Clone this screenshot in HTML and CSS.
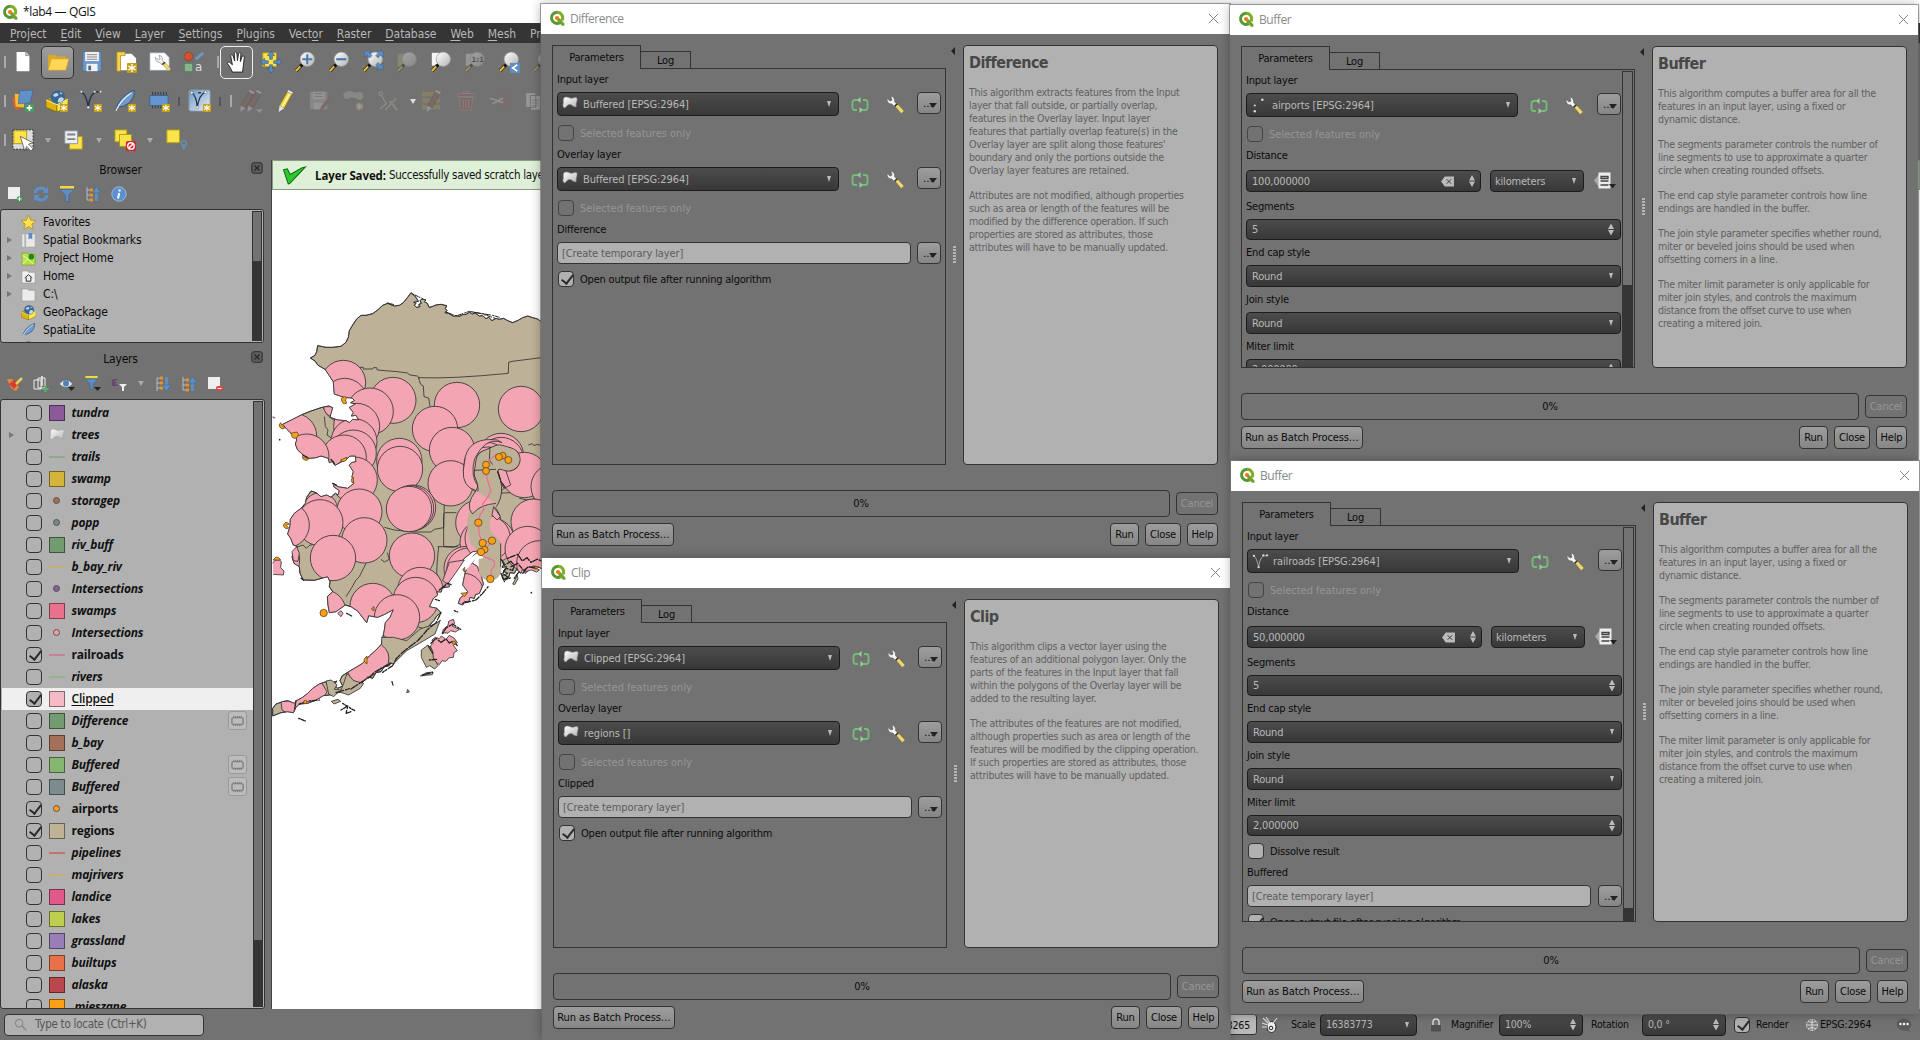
FILE: index.html
```html
<!DOCTYPE html>
<html lang="en">
<head>
<meta charset="utf-8">
<title>*lab4 — QGIS</title>
<link rel="stylesheet" href="styles.css">
</head>
<body>
<svg class="defs" aria-hidden="true">
  <defs>
    <linearGradient id="lens" x1="0" y1="0" x2="1" y2="1"><stop offset="0" stop-color="#fff"/><stop offset="1" stop-color="#b4b4b4"/></linearGradient>
    <linearGradient id="bluebox" x1="0" y1="0" x2="1" y2="1"><stop offset="0" stop-color="#6d97c4"/><stop offset="1" stop-color="#e8f0f8"/></linearGradient>
    <symbol id="logo" viewBox="0 0 16 16"><path d="M8 2.200a5.600 5.600 0 1 0 2.600 10.600" fill="none" stroke="#589632" stroke-width="3"/><path d="M8 2.200a5.600 5.600 0 0 1 5 8.200" fill="none" stroke="#7fae2a" stroke-width="3"/><path d="M8.200 8.600l2.600-.4 4.600 5.200v2.400h-2.400L8.200 11z" fill="#6fa32c"/><circle cx="8" cy="8" r="2.100" fill="#ee7913"/></symbol>
    <symbol id="close" viewBox="0 0 12 12"><path d="M1 1l10 10M11 1L1 11" stroke="#777" stroke-width="1" fill="none"/></symbol>
    <symbol id="loop" viewBox="0 0 18 16"><path d="M6.500 3H4q-2.500 0-2.500 2.500v5Q1.500 13 4 13h2M11.500 13H14q2.500 0 2.500-2.500v-5Q16.500 3 14 3h-2" fill="none" stroke="#74bd78" stroke-width="1.800"/><path d="M9.500 0v6L6 3zM8.500 10v6l3.500-3z" fill="#8fd493"/></symbol>
    <symbol id="wrench" viewBox="0 0 18 18"><path d="M1 2.500l3 2.500 2-.8L5 0q4 1 3.500 5.500L11 8.500 8.500 11 6 8Q1 8 1 2.500z" fill="#f4f4f4" stroke="#555" stroke-width=".5"/><path d="M8.500 9.500l2.500-2 7 7.500-2.800 2.500z" fill="#f0d774" stroke="#8a7a30" stroke-width=".5"/><path d="M8 9.800l3-2.600 1 1-3 2.700z" fill="#333"/></symbol>
    <symbol id="poly" viewBox="0 0 18 14"><path d="M2.500 1.500Q5 0 7.500 1.500q2.500 1.500 5 .5t4-.3Q17.600 3 16.500 6t-.5 5.500q-1.500 1-3.500-.5Q9.500 8 7 9.500T3.500 13Q1.500 13.500 1 10q1-3 .5-5 0-2.500 1-3.500z" fill="url(#lens)" stroke="#999" stroke-width=".6"/></symbol>
    <symbol id="pts" viewBox="0 0 18 18"><g fill="#ddd"><circle cx="4" cy="9" r="1.100"/><circle cx="4" cy="15" r="1.300"/><circle cx="12" cy="3" r="1.300"/></g></symbol>
    <symbol id="vline" viewBox="0 0 18 18"><path d="M2 3q3 2 5 12Q8 6 12 3h4" fill="none" stroke="#aaa" stroke-width="1"/><g fill="#ddd"><circle cx="2" cy="3" r="1.200"/><circle cx="7" cy="15" r="1.200"/><circle cx="12" cy="2.500" r="1.200"/><circle cx="16" cy="2.500" r="1.200"/></g></symbol>
    <symbol id="clear" viewBox="0 0 14 12"><path d="M0 6l4-5.500h10v11H4z" fill="#bbb"/><path d="M6 3.500l5 5M11 3.500l-5 5" stroke="#333" stroke-width="1"/></symbol>
    <symbol id="ddef" viewBox="0 0 22 18"><path d="M0 8.500l5-6V15z" fill="#aaa"/><path d="M4.500.500h12v16h-12z" fill="#ececec"/><path d="M7 4.500h7v2H7zM6.500 9h8M6.500 13h8" stroke="#444" fill="none" stroke-width="1.300"/><path d="M15 12h7l-3.500 4.500z" fill="#222"/></symbol>
    <symbol id="star" viewBox="0 0 9 9"><rect width="9" height="9" rx="1" fill="#c9a011"/><path d="M4.500 1v7M1.300 2.800l6.400 3.400M7.700 2.800L1.300 6.200" stroke="#fff" stroke-width="1.200"/></symbol>
    <symbol id="mag" viewBox="0 0 22 24"><path d="M1 22l6-6.500" stroke="#222" stroke-width="3.500"/><path d="M1 22l5.500-6" stroke="#f4c22c" stroke-width="2.200"/><path d="M6 17l2.600-3" stroke="#111" stroke-width="3"/><circle cx="13.500" cy="9" r="7.800" fill="url(#lens)" stroke="#999" stroke-width=".8"/></symbol>
    <symbol id="pencil" viewBox="0 0 18 24"><path d="M2 17L10.500 2l5 2.500L7 20z" fill="#f3d947" stroke="#8a7718" stroke-width=".8"/><path d="M10.500 2l5 2.500 1-2L11.500 0z" fill="#f0f0f0" stroke="#888" stroke-width=".4"/><path d="M5 18L13 4" stroke="#fff6b0" stroke-width="1.500"/><path d="M1 24l1-7 5 3z" fill="#e4e4e4"/></symbol>
    <symbol id="pencil2" viewBox="0 0 18 24"><path d="M2 17L10.500 2l5 2.500L7 20z" fill="#8a5a48" stroke="#4a2f26" stroke-width=".8"/><path d="M10.500 2l5 2.500 1-2L11.500 0z" fill="#f0f0f0"/><path d="M1 24l1-7 5 3z" fill="#e4e4e4"/></symbol>
    <symbol id="chip" viewBox="0 0 14 12"><rect x="1" y="2.500" width="12" height="7" rx="1" fill="#bbb" stroke="#777" stroke-width="1.300"/><path d="M3 .5v2M5 .5v2M7 .5v2M9 .5v2M11 .5v2M3 9.500v2M5 9.500v2M7 9.500v2M9 9.500v2M11 9.500v2" stroke="#777"/></symbol>
    <symbol id="box" viewBox="0 0 24 24"><path d="M0 11l12 4v9L0 19z" fill="#e0b40c" stroke="#6b5a0b" stroke-width=".7"/><path d="M12 15l12-5v8l-12 6z" fill="#fbe94b" stroke="#6b5a0b" stroke-width=".7"/><path d="M0 11l11-5 13 4-12 6z" fill="#b08f10"/><circle cx="13" cy="8" r="7.800" fill="#3c6692"/><path d="M8 5q3-3 5-1t-2 3-3-2zM14 9q3-2 5 0t-3 4-2-4zM15 2l3 2-2 1z" fill="#c5d8ea"/><path d="M0 11l12 5 12-6" fill="none" stroke="#fff9a0"/></symbol>
    <symbol id="feather" viewBox="0 0 22 24"><path d="M1 23Q3 8 21 0q1 6-3 11-2 4-6 5-3 3-7 2" fill="#6f9ccb" stroke="#29425e" stroke-width=".8"/><path d="M1 23Q6 11 18 3" fill="none" stroke="#e3eefa" stroke-width="1.200"/></symbol>
    <symbol id="filter" viewBox="0 0 14 16"><path d="M0 0h14v2.500H0z" fill="#f2d83c"/><path d="M0 3.500h14L8.800 9v6.500H5.500V9z" fill="#5e8fc4" stroke="#3f648d" stroke-width=".6"/></symbol>
    <symbol id="expand" viewBox="0 0 15 16"><path d="M1.500 1v13h4M1.500 4h4M1.500 9h4" fill="none" stroke="#bbb"/><path d="M4.500 2.500h3v3h-3zM4.500 7.500h3v3h-3zM4.500 12.500h3v3h-3z" fill="#f0921c"/><path d="M11 15V6" stroke="#5e8fc4" stroke-width="3"/><path d="M11 .5L15.500 7h-9z" fill="#5e8fc4" stroke="#3f648d" stroke-width=".6"/></symbol>
    <symbol id="x" viewBox="0 0 12 12"><rect x=".7" y=".7" width="10.600" height="10.600" rx="3" fill="#5c5c5c" stroke="#3b3b3b" stroke-width="1.300"/><path d="M3.500 3.500l5 5M8.500 3.500l-5 5" stroke="#2c2c2c" stroke-width="1.500"/></symbol>
  </defs>
</svg>

<div class="desk">
<main class="app">
  <header class="app-title"><svg class="i16"><use href="#logo"/></svg><span>*lab4 — QGIS</span></header>
  <nav class="menu">
    <span><u>P</u>roject</span><span><u>E</u>dit</span><span><u>V</u>iew</span><span><u>L</u>ayer</span><span><u>S</u>ettings</span><span><u>P</u>lugins</span><span>Vect<u>o</u>r</span><span><u>R</u>aster</span><span><u>D</u>atabase</span><span><u>W</u>eb</span><span><u>M</u>esh</span><span>Pro<u>c</u>essing</span>
  </nav>

  <div class="bar bar1">
    <i class="grip"></i>
    <svg class="t" viewBox="0 0 24 24"><path d="M5 1h10l4 4v17H5z" fill="#fff"/><path d="M15 1v4h4" fill="#ccc" stroke="#555" stroke-width=".6"/></svg>
    <div class="tb open"><svg class="t" viewBox="0 0 24 24"><path d="M1 20V4h8l2 2h10v4" fill="#d9a92c"/><path d="M1 21L4.500 8.500H24L20.500 21z" fill="#ffd755" stroke="#c39a27" stroke-width=".7"/></svg></div>
    <svg class="t" viewBox="0 0 24 24"><path d="M2 1h20v21H2z" fill="#6c98c9" stroke="#4b7099" stroke-width=".8"/><path d="M4.500 1h15v10h-15z" fill="#f1f1f1"/><path d="M6.500 4h11M6.500 6.500h11M6.500 9h11" stroke="#777" stroke-width=".9"/><path d="M6 14h12v8H6z" fill="#f1f1f1"/><path d="M8 16h3v5H8z" fill="#46698f"/></svg>
    <svg class="t" viewBox="0 0 24 24"><path d="M5 3h13l5 5v13H5z" fill="#fff"/><path d="M2 1h9v4H6v17H2z" fill="#f6d34a" stroke="#a98513" stroke-width=".8"/><use href="#star" x="13" y="13" width="11" height="11"/></svg>
    <svg class="t" viewBox="0 0 24 24"><path d="M1 2h16l5 5v14H1z" fill="#fff" stroke="#8ab" stroke-width=".7"/><use href="#wrench" x="6" y="4" width="18" height="19"/></svg>
    <svg class="t" viewBox="0 0 24 24"><circle cx="6" cy="6" r="4.800" fill="#cf5330" stroke="#84301a" stroke-width=".6"/><path d="M13 8l8-7 2 2-8 7z" fill="#6c9bd0"/><path d="M1.500 13.500h9v9h-9z" fill="#84b58b" stroke="#40704a" stroke-width=".6"/><text x="13" y="22" class="stya">a</text></svg>
    <i class="grip g2"></i>
    <div class="tb pan"><svg class="t" viewBox="0 0 24 24"><path d="M7 23Q5 18 1.500 13.500q0-2 2-1.500L7 15 5 5q1.500-2 2.600 0L9.500 11 9 2q1.500-2 2.800 0l.7 8.500 1.200-8q1.700-1.500 2.600 0l-.6 9 2-6q1.800-.8 2.300 1Q19 16 18 23z" fill="#fff" stroke="#222" stroke-width="1"/></svg></div>
    <svg class="t" viewBox="0 0 24 24"><path d="M3 2h15v15H3z" fill="#fbe34a" stroke="#b2960f"/><g fill="#5d8cc2" stroke="#2f5078" stroke-width=".6"><path d="M12 0l4 5h-2.500v4h-3V5H8zM12 24l4-5h-2.500v-4h-3v4H8zM0 12l5-4v2.500h4v3H5V16zM24 12l-5-4v2.500h-4v3h4V16z"/></g></svg>
    <svg class="t" viewBox="0 0 22 24"><use href="#mag"/><path d="M8 9h11M13.500 3.500v11" stroke="#4a79b0" stroke-width="2.200"/></svg>
    <svg class="t" viewBox="0 0 22 24"><use href="#mag"/><path d="M8 9h11" stroke="#4a79b0" stroke-width="2.400"/></svg>
    <svg class="t" viewBox="0 0 22 24"><use href="#mag"/><g fill="#5d8cc2" stroke="#345c88" stroke-width=".5"><path d="M2 0h7L7 2l3 3-2.500 2.500-3-3L2 7zM22 0h-7l2 2-3 3 2.500 2.500 3-3L22 7zM22 20h-7l2-2-3-3 2.500-2.500 3 3 2.500-2.500z"/></g></svg>
    <svg class="t off" viewBox="0 0 22 24"><path d="M1 3h9v14H1z" fill="#b5ae70"/><use href="#mag"/></svg>
    <svg class="t" viewBox="0 0 22 24"><path d="M1 2h12v14H1z" fill="#f5f5f5"/><use href="#mag"/></svg>
    <svg class="t off" viewBox="0 0 22 24"><path d="M1 3h9v13H1z" fill="#ddd"/><use href="#mag"/><text x="7" y="12.500" class="one">1:1</text></svg>
    <svg class="t" viewBox="0 0 22 24"><use href="#mag"/><path d="M12 13h11v11H12z" fill="#5d8cc2"/><path d="M20 15l-5 3.500 5 3.500" fill="none" stroke="#fff" stroke-width="1.800"/></svg>
    <svg class="t off" viewBox="0 0 22 24"><use href="#mag"/></svg>
  </div>

  <div class="bar bar2">
    <i class="grip"></i>
    <svg class="t" viewBox="0 0 24 24"><path d="M0 9l9-3 4 12-9 4z" fill="#d5642a"/><path d="M3 4l11 1-1 14-9-1z" fill="#f0bc33"/><path d="M8 1l15-1-3 14-13 1z" fill="#5f90c8" stroke="#39608c" stroke-width=".6"/><rect x="14" y="15" width="10" height="9" rx="1" fill="#4c9a63"/><path d="M19 16.500v6M16 19.500h6" stroke="#fff" stroke-width="1.800"/></svg>
    <svg class="t" viewBox="0 0 24 24"><use href="#box"/><use href="#star" x="15" y="15" width="9" height="9"/></svg>
    <svg class="t" viewBox="0 0 24 24"><path d="M1 2Q7 4 9 19q1-13 8-17h7" fill="none" stroke="#223346" stroke-width="1.500"/><g fill="#e6eef7" stroke="#445" stroke-width=".5"><circle cx="1.500" cy="2" r="1.400"/><circle cx="9" cy="19" r="1.600"/><circle cx="16" cy="2" r="1.400"/><circle cx="22.500" cy="2" r="1.400"/></g><use href="#star" x="15" y="15" width="9" height="9"/></svg>
    <svg class="t" viewBox="0 0 24 24"><use href="#feather"/><use href="#star" x="15" y="15" width="9" height="9"/></svg>
    <svg class="t" viewBox="0 0 24 24"><path d="M5 2v18M8 2v18M11 2v18M14 2v18M17 2v18M20 2v18" stroke="#333" stroke-width="1"/><path d="M2 6h20v11H2z" fill="#6496cd" stroke="#3c6592"/><use href="#star" x="15" y="15" width="9" height="9"/></svg>
    <i class="sep s1"></i>
    <svg class="t" viewBox="0 0 24 24"><rect x="0" y="0" width="23" height="23" rx="2" fill="url(#bluebox)" stroke="#89a"/><path d="M3 3q5 3 6 16Q11 5 18 2M13 3h-3" fill="none" stroke="#24384d" stroke-width="1.400"/><g fill="#fff" stroke="#445" stroke-width=".5"><circle cx="3" cy="3" r="1.500"/><circle cx="9" cy="19" r="1.500"/><circle cx="18" cy="2.500" r="1.500"/></g><use href="#star" x="15" y="15" width="9" height="9"/></svg>
    <i class="sep s2"></i><i class="grip g3"></i>
    <svg class="t dim" viewBox="0 0 24 24"><use href="#pencil2" x="-2" width="18" height="24"/><use href="#pencil2" x="6" width="18" height="24"/><path d="M16 21h8l-4 4z" fill="#ddd"/></svg>
    <svg class="t" viewBox="0 0 24 24"><use href="#pencil" x="3" width="18" height="24"/></svg>
    <svg class="t dim" viewBox="0 0 24 24"><path d="M1 2h19v19H1z" fill="#bbb"/><path d="M4 2h13v8H4zM5 14h10v7H5z" fill="#eee"/><path d="M6 4h9M6 7h9" stroke="#777"/><path d="M12 23l1-5 8-9 3 2-8 9z" fill="#955"/></svg>
    <svg class="t dim" viewBox="0 0 24 24"><path d="M1 3q8-4 12 0 10-3 9 5-2 5-8 1-6-2-9 1-6 0-4-7z" fill="#b8c4b0"/><path d="M13 13h10v10H13z" fill="#8a7a40"/><path d="M18 14v8M14 18h8M15 15l6 6M21 15l-6 6" stroke="#fff" stroke-width="1.300"/></svg>
    <svg class="t dim" viewBox="0 0 24 24"><circle cx="4" cy="4" r="2" fill="none" stroke="#eee"/><path d="M5 6l5 9-7 6M9 22L21 9" stroke="#ccc" stroke-width="1.500" fill="none"/><path d="M14 12l8 10" stroke="#cb7" stroke-width="2.500"/></svg>
    <i class="arr a1"></i>
    <svg class="t dim" viewBox="0 0 24 24"><path d="M1 2h20v5H1zM1 9h20v5H1zM1 16h20v5H1z" fill="#b5a548"/><use href="#pencil2" x="5" width="18" height="24"/></svg>
    <svg class="t dim" viewBox="0 0 24 24"><path d="M3 4h18v3H3zM9 2h6v2H9zM5 8h14l-1 14H6z" fill="#a44" stroke="#bbb" stroke-width=".8"/><path d="M9 10v10M12 10v10M15 10v10" stroke="#bbb"/></svg>
    <svg class="t dim" viewBox="0 0 24 24"><path d="M1 9l15 5M4 15l13-7" stroke="#ddd" stroke-width="1.800"/><circle cx="19" cy="7" r="3" fill="none" stroke="#a55" stroke-width="1.800"/><circle cx="19" cy="16" r="3" fill="none" stroke="#a55" stroke-width="1.800"/></svg>
    <svg class="t off" viewBox="0 0 24 24"><path d="M3 3h11v16H3zM8 6h11v16H8z" fill="#ddd" stroke="#666"/><path d="M10 11h7M10 14h7M10 17h7" stroke="#777"/></svg>
  </div>

  <div class="bar bar3">
    <i class="grip"></i>
    <svg class="t" viewBox="0 0 24 24"><path d="M1 1h22v21H1z" fill="#ddd" stroke="#222" stroke-dasharray="2 1.500"/><path d="M2 2h14v14H2z" fill="#fbe34a" stroke="#b2960f"/><path d="M9 8l14 7-5 1.500 5 5-2.500 2.500-4.500-5-2 5z" fill="#fff" stroke="#444" stroke-width=".8"/></svg>
    <i class="arr"></i>
    <svg class="t" viewBox="0 0 24 24"><path d="M7 8h14v14H7z" fill="#fbe34a" stroke="#b2960f"/><path d="M2 2h14v14H2z" fill="#eee" stroke="#8a8f96"/><path d="M4.500 6h9M4.500 11h9" stroke="#7a8490" stroke-width="2"/></svg>
    <i class="arr"></i>
    <svg class="t" viewBox="0 0 24 24"><path d="M1 1h13v13H1z" fill="#fbe34a" stroke="#b2960f"/><path d="M6 6h13v13H6z" fill="#fbe34a" stroke="#b2960f"/><rect x="13" y="13" width="11" height="11" rx="2" fill="#d8262a"/><circle cx="18.500" cy="18.500" r="3.500" fill="none" stroke="#fff" stroke-width="1.500"/><path d="M16 21l5-5" stroke="#fff" stroke-width="1.500"/></svg>
    <i class="arr"></i>
    <svg class="t" viewBox="0 0 24 24"><path d="M2 1h14v14H2z" fill="#fbe34a" stroke="#b2960f"/><circle cx="20.500" cy="15.500" r="2.700" fill="none" stroke="#5f90b8" stroke-width="1.500"/><path d="M18 17.500l2.500 6 2.500-6z" fill="#5f90b8"/></svg>
  </div>

  <section class="work">
    <aside class="docks">
      <h2 class="dock-title">Browser<svg class="dx"><use href="#x"/></svg></h2>
      <div class="dock-tools">
        <svg viewBox="0 0 16 16"><path d="M1 1h12v12H1z" fill="#eee"/><circle cx="12.500" cy="13" r="2.800" fill="#3f9a52"/><path d="M12.500 11v4M10.500 13h4" stroke="#fff"/></svg>
        <svg viewBox="0 0 16 16"><path d="M2 7q1-5 6-5 3 0 4.500 2M14 9q-1 5-6 5-3 0-4.500-2" fill="none" stroke="#5c90cb" stroke-width="3"/><path d="M15 1v6H9zM1 15V9h6z" fill="#5c90cb"/></svg>
        <svg viewBox="0 0 14 16"><use href="#filter"/></svg>
        <svg viewBox="0 0 15 16"><use href="#expand"/></svg>
        <svg viewBox="0 0 16 16"><circle cx="8" cy="8" r="7.200" fill="#5b8fcf" stroke="#a9c4e6" stroke-width=".8"/><path d="M8.600 3.500v2M8.200 7l-1.200 5.500" stroke="#fff" stroke-width="2"/></svg>
      </div>
      <div class="tree">
        <ul>
          <li><i></i><svg viewBox="0 0 16 16"><path d="M8 0l2.200 5.500 5.800.4-4.500 3.800L13 15.500 8 12.300 3 15.500l1.500-5.800L0 5.900l5.800-.4z" fill="#ffe14a" stroke="#b38a10" stroke-width=".8"/></svg>Favorites</li>
          <li><i class="tri"></i><svg viewBox="0 0 16 16"><path d="M1 1h3v14H1zM5 1h10v14H5z" fill="#e9e9e9" stroke="#aaa" stroke-width=".6"/><path d="M8 0h4v7l-2-1.500L8 7z" fill="#5d8cc2"/></svg>Spatial Bookmarks</li>
          <li><i class="tri"></i><svg viewBox="0 0 16 16"><path d="M1 2h6l1 1.500h7V15H1z" fill="#b5e04b" stroke="#7a9a2a" stroke-width=".7"/><path d="M2 5l5 3 6 6M2 14l5-6" stroke="#e9f7b4" fill="none"/><circle cx="11" cy="6" r="3" fill="#1c8b12"/></svg>Project Home</li>
          <li><i class="tri"></i><svg viewBox="0 0 16 16"><path d="M1 2h6l1 1.500h7V15H1z" fill="#f1f1f1" stroke="#999" stroke-width=".7"/><path d="M4 9.500l4-3.500 4 3.500M5.500 9v4h5V9" fill="none" stroke="#222"/></svg>Home</li>
          <li><i class="tri"></i><svg viewBox="0 0 16 16"><path d="M1 2h6l1 1.500h7V15H1z" fill="#ececec" stroke="#999" stroke-width=".7"/></svg>C:\</li>
          <li><i></i><svg viewBox="0 0 24 24"><use href="#box"/></svg>GeoPackage</li>
          <li><i></i><svg viewBox="0 0 22 24"><use href="#feather"/></svg>SpatiaLite</li>
          <li><i></i><svg viewBox="0 0 16 16"><path d="M1 16V4q7-6 14 0v12z" fill="#5d8cb2" stroke="#2d4a66"/></svg></li>
        </ul>
        <div class="sb"><b></b></div>
      </div>
      <h2 class="dock-title lt">Layers<svg class="dx"><use href="#x"/></svg></h2>
      <div class="dock-tools lay">
        <svg viewBox="0 0 16 16"><path d="M0 3l5 0 7 8-3 4-5-3z" fill="#e9883a"/><path d="M2 8l5-4 4 4-4 5z" fill="#d33e32"/><path d="M9 8l6-6" stroke="#f1cb54" stroke-width="2.500"/></svg>
        <svg viewBox="0 0 16 16"><path d="M1 4h7v9H1zM5 2h7v10H5z" fill="none" stroke="#eee"/><path d="M9 0v10" stroke="#eee" stroke-width="1.500"/><path d="M12.500 10v6M9.500 13h6" stroke="#57b36a" stroke-width="2.200"/></svg>
        <svg viewBox="0 0 16 16"><path d="M0 8q7-8 14 0-7 7-14 0z" fill="#dfe8f1" stroke="#556" stroke-width=".7"/><circle cx="7" cy="7.500" r="3" fill="#4d82ba"/><path d="M9 11h7l-3.500 4z" fill="#222"/></svg>
        <svg viewBox="0 0 16 16"><use href="#filter" width="13" height="14"/><path d="M9 11h7l-3.500 4z" fill="#222"/></svg>
        <svg viewBox="0 0 16 16"><text x="0" y="10" class="eps">ε</text><path d="M8 8h8l-3 3v4h-2v-4z" fill="#eee"/></svg>
        <i class="arr"></i>
        <svg viewBox="0 0 15 16"><g transform="matrix(1 0 0 -1 0 16)"><use href="#expand"/></g></svg>
        <svg viewBox="0 0 15 16"><use href="#expand"/></svg>
        <svg viewBox="0 0 16 16"><path d="M1 1h12v12H1z" fill="#eee"/><rect x="9" y="10" width="7" height="5" rx="2" fill="#e0453c"/><path d="M10.500 12.500h4" stroke="#fff"/></svg>
      </div>
      <div class="layers">
        <ul>
          <li><i></i><b></b><s class="sw c1"></s><em>tundra</em></li>
          <li><i class="tri"></i><b></b><svg class="pl"><use href="#poly"/></svg><em>trees</em></li>
          <li><i></i><b></b><s class="ln l1"></s><em>trails</em></li>
          <li><i></i><b></b><s class="sw c2"></s><em>swamp</em></li>
          <li><i></i><b></b><s class="pt p1"></s><em>storagep</em></li>
          <li><i></i><b></b><s class="pt p2"></s><em>popp</em></li>
          <li><i></i><b></b><s class="sw c3"></s><em>riv_buff</em></li>
          <li><i></i><b></b><s class="ln l2"></s><em>b_bay_riv</em></li>
          <li><i></i><b></b><s class="pt p3"></s><em>Intersections</em></li>
          <li><i></i><b></b><s class="sw c4"></s><em>swamps</em></li>
          <li><i></i><b></b><s class="pt p4"></s><em>Intersections</em></li>
          <li><i></i><b class="on"></b><s class="ln l3"></s><em class="up">railroads</em></li>
          <li><i></i><b></b><s class="ln l4"></s><em>rivers</em></li>
          <li class="sel"><i></i><b class="on"></b><s class="sw c5"></s><em class="up un">Clipped</em></li>
          <li><i></i><b></b><s class="sw c3"></s><em>Difference</em><span class="mem"><svg><use href="#chip"/></svg></span></li>
          <li><i></i><b></b><s class="sw c6"></s><em>b_bay</em></li>
          <li><i></i><b></b><s class="sw c7"></s><em>Buffered</em><span class="mem"><svg><use href="#chip"/></svg></span></li>
          <li><i></i><b></b><s class="sw c8"></s><em>Buffered</em><span class="mem"><svg><use href="#chip"/></svg></span></li>
          <li><i></i><b class="on"></b><s class="pt p5"></s><em class="up">airports</em></li>
          <li><i></i><b class="on"></b><s class="sw c9"></s><em class="up">regions</em></li>
          <li><i></i><b></b><s class="ln l5"></s><em>pipelines</em></li>
          <li><i></i><b></b><s class="ln l2"></s><em>majrivers</em></li>
          <li><i></i><b></b><s class="sw c10"></s><em>landice</em></li>
          <li><i></i><b></b><s class="sw c11"></s><em>lakes</em></li>
          <li><i></i><b></b><s class="sw c12"></s><em>grassland</em></li>
          <li><i></i><b></b><s class="sw c13"></s><em>builtups</em></li>
          <li><i></i><b></b><s class="sw c14"></s><em>alaska</em></li>
          <li><i></i><b></b><s class="sw c15"></s><em>&nbsp;mieszane</em></li>
        </ul>
        <div class="sb"><b></b></div>
      </div>
    </aside>

    <div class="canvas">
      <div class="msg"><svg viewBox="0 0 24 20"><path d="M1 4l4-1 3 6L20 2l4-1L8 18 6 19z" fill="#2ec82e" stroke="#126a12" stroke-width="1.100"/></svg><strong>Layer Saved:</strong>&nbsp;Successfully saved scratch layer</div>
      <svg class="map" viewBox="18 -270 882 2457" preserveAspectRatio="xMinYMin slice">
        <defs>
          <path id="land" d="M900 150L828 127 815 117 800 113 785 108 770 113 758 120 740 128 725 122 713 115 700 118 690 115 678 122 668 112 660 116 650 107 640 108 627 99 620 102 610 97 600 103 590 104 580 109 570 107 562 109 548 100 537 98 543 92 538 86 542 77 525 73 510 75 498 80 489 82 484 70 475 65 480 60 468 57 462 62 466 70 458 74 462 80 452 82 445 76 450 70 443 67 457 64 450 52 435 38 425 52 412 68 400 76 385 78 365 70 350 76 335 90 320 101 300 106 285 106 272 117 260 135 250 152 247 172 240 187 225 199 200 202 180 202 155 197 152 215 147 226 133 234 148 244 155 255 177 268 190 287 202 305 203 322 205 342 220 347 235 352 258 354 266 362 254 368 268 372 258 378 250 382 262 398 256 408 270 406 278 420 260 418 250 428 240 422 215 420 192 412 195 400 200 383 188 378 165 383 135 393 110 403 80 418 50 433 62 447 75 460 90 468 92 480 88 492 95 510 112 525 128 535 150 533 165 528 187 535 190 548 202 543 207 556 225 546 240 540 252 528 268 528 270 545 256 548 250 556 262 575 258 590 264 610 245 625 215 620 205 612 203 620 220 632 216 645 208 640 195 652 182 645 165 650 150 638 135 633 122 652 118 670 105 685 85 700 73 718 72 738 65 762 74 775 82 795 95 800 84 815 78 830 84 850 100 860 102 880 112 900 145 901 185 890 192 905 190 920 200 935 184 950 186 975 190 998 210 995 238 975 255 980 275 993 288 1010 302 1028 308 1007 335 1012 356 1003 382 989 372 1012 358 1028 355 1050 350 1075 347 1092 330 1110 310 1128 290 1150 265 1165 245 1177 228 1188 222 1202 230 1218 215 1225 205 1215 212 1203 195 1210 180 1205 160 1212 140 1225 125 1240 110 1252 92 1262 85 1270 65 1262 50 1265 30 1272 20 1285 20 1308 45 1298 65 1295 82 1298 90 1282 100 1272 125 1270 150 1260 172 1247 190 1245 210 1240 240 1230 262 1222 290 1207 305 1190 320 1195 330 1178 345 1175 355 1160 368 1158 375 1148 390 1143 388 1134 400 1125 418 1100 432 1096 445 1085 450 1072 460 1062 472 1060 485 1045 494 1032 505 1020 512 1008 525 998 512 985 490 980 502 955 515 945 512 935 526 936 528 924 550 920 545 895 563 880 560 870 578 855 595 835 620 815 640 812 652 802 625 825 608 845 600 860 620 850 635 860 638 873 645 885 652 912 640 940 628 944 625 955 612 952 608 966 596 964 590 975 577 970 582 955 605 935 590 915 597 880 605 860 630 835 650 825 690 842 695 850 707 838 715 850 708 862 722 860 712 874 726 880 708 886 712 898 728 892 732 878 745 880 752 868 765 880 770 866 778 880 790 868 800 858 815 860 828 866 900 880Z"/>
          <clipPath id="cl"><use href="#land"/><path d="M20 850l8-10 12 0 6 5-2 18 10 10-2 12-30-2z"/></clipPath>
        </defs>
        <g stroke="#333" stroke-width="2.500" stroke-linejoin="round">
          <use href="#land" fill="#bdb297"/>
          <path d="M280 262h12v5h28l2-4h10l2 7 60 5 30 4 8 6 22 3 8 7M457 293q100 4 270-13l1-33 10-3 160-20M457 293l7 20 8 5 2 32 14 4 5 30-2 20M175 410l3 30 8 10-3 15 12 8M622 569l70-3 30-8M787 495l12-4 5 6 10-4 14 4v30M355 742l30 8 60 6 50 0 10-8 28-5 2-72 2-30 30-2M533 700v100l30 2 18-8M518 800l-4 40-2 40 10 20M515 800h60M535 698h36M240 950q20-30 30-50l10-10 20-40M345 838l10 8 15-8-6-20M96 800l15-5 10 10 8-8 22-8M760 655l30 6 14-5 24 8M605 670l50-20 30-10 80-3M390 1130l60-40 70-60M455 1040l30 10 40-30" fill="none"/>
          <g clip-path="url(#cl)" fill="#f4a5b3">
            <circle cx="232" cy="308" r="67"/><circle cx="236" cy="362" r="67"/><circle cx="381" cy="361" r="69"/><circle cx="312" cy="394" r="70"/><circle cx="272" cy="439" r="69"/><circle cx="264" cy="485" r="69"/><circle cx="262" cy="519" r="69"/><circle cx="234" cy="532" r="67"/><circle cx="265" cy="600" r="69"/>
            <circle cx="84" cy="468" r="68"/><circle cx="122" cy="529" r="67"/><path d="M170 380h35l-8 30q-20-5-25-30z"/>
            <circle cx="573" cy="375" r="68"/><circle cx="765" cy="387" r="68"/><circle cx="507" cy="447" r="68"/><circle cx="558" cy="510" r="68"/><circle cx="400" cy="543" r="68"/><circle cx="402" cy="567" r="68"/><circle cx="554" cy="610" r="68"/>
            <circle cx="163" cy="690" r="52"/><circle cx="280" cy="695" r="68"/><circle cx="162" cy="728" r="69"/><circle cx="62" cy="735" r="68"/><circle cx="441" cy="683" r="68"/><circle cx="435" cy="685" r="68"/><circle cx="429" cy="687" r="68"/><circle cx="295" cy="781" r="68"/><circle cx="201" cy="834" r="68"/><circle cx="438" cy="827" r="68"/><circle cx="35" cy="840" r="66"/><circle cx="173" cy="996" r="67"/>
            <circle cx="463" cy="930" r="68"/><circle cx="449" cy="960" r="68"/><circle cx="320" cy="978" r="68"/><circle cx="393" cy="1012" r="68"/>
            <circle cx="705" cy="528" r="68"/><circle cx="705" cy="540" r="68"/><circle cx="662" cy="555" r="68"/><circle cx="665" cy="573" r="72"/><circle cx="775" cy="585" r="68"/><circle cx="863" cy="620" r="68"/>
            <circle cx="637" cy="728" r="68"/><circle cx="650" cy="788" r="68"/><circle cx="600" cy="865" r="66"/><circle cx="608" cy="870" r="66"/><circle cx="678" cy="782" r="68"/><circle cx="665" cy="775" r="68"/><circle cx="803" cy="725" r="68"/><circle cx="785" cy="807" r="68"/><circle cx="820" cy="850" r="68"/>
            <circle cx="593" cy="940" r="60"/><path d="M350 1090q22 20 20 58l-60 45-10 20q-45 0-55-38l20-20z"/><path d="M165 1205l18 30-15 25-40 15-55 30-25-15-3-25 30-3 30-25z"/>
            <path d="M692 560l22-5 20 60-20 10-15-25z"/>
          </g>
          <use href="#land" fill="none"/>
          <path d="M592 570q-4 50 38 62l6-14q-24-30-10-82 30-60 70-52l12 4-14-8q-80-10-96 50z" fill="#f4a5b3"/>
          <path d="M727 538L700 530 665 545 660 580Q680 625 665 655" fill="none" stroke="#333" stroke-width="73" stroke-linecap="round"/>
          <path d="M727 538L700 530 665 545 660 580Q680 625 665 655L645 690 637 728 642 770 672 800V868" fill="none" stroke="#bdb297" stroke-width="68" stroke-linecap="round"/>
          <path d="M672 500l-2 40 10 14M625 571l65-3M704 790v70" fill="none"/>
          <path d="M580 869l25-30 38-25 12 8-4 12-28 8-20 26-20 10z" fill="#fff" stroke="none"/>
          <path d="M630 632q-35 45-10 70 20-28 70-32M683 680l20 30-10 10-15-15zM595 840l-20 30-30 42-15-10 20-55z" fill="#f4a5b3"/>
          <g fill="#bdb297">
            <path d="M180 1203l15-3 18 14-8 14 20 2 8-20 10-30 20 22 30 8-10 15-35 20-30-10-15 15-15-8z"/>
            <path d="M347 1072l35 0 40 10 40-35 45-15 15-10-15 40-50 30-35 20-40 40-15-5q8-30-20-52z"/>
            <path d="M466 1110l20-15 12 12 8 30 10 20-10 10-15-10-10 5-15-30z"/>
            <path d="M463 1188l18-10 20-2-2 8-20 2z"/><path d="M740 912l14-26 2 10-10 18zM425 1228l5 8-8 2zM196 1264l20-6 8 6-20 8z"/>
          </g>
          <g fill="#f4a5b3">
            <path d="M493 1098l8-8-3-10 10-8 12 4 6-8 14 10 10-12 14 8 10 14-12 8 12 16-10 6-2 14-14 2-8 10-12-2-8 12-10-8-8-12-2-20z"/>
            <path d="M528 1062l4-14 14-12 2-12 14-6 4 12-8 8 22 10-12 8-14-4-8 8-10-2z"/>
            <path d="M215 1000l10-8 6 8-6 10zM78 815l14-15 8 20-4 24-14-2z"/>
            <path d="M772 870l14-8 14-2 20 10-8 6-16-6-14 4z"/>
          </g>
          <path d="M20 850l8-10 12 0 6 5-2 18 10 10-2 12-30-2" fill="none"/>
        </g>
        <g fill="none" stroke="#222" stroke-width="4" stroke-dasharray="5 4 9 3 3 6" stroke-linecap="round">
          <path d="M440 42l30 14M540 96l30 12 40-14 40 8 40 14M620 96l60 10 20 6M365 69l20 5" stroke-width="3"/>
          <path d="M525 998l-15 30-25 20-15 18-15 16-20 15-25 20-20 20-10 20-30 20"/>
          <path d="M375 1150l-30 15-20 12-15 15-25 15-30 20M210 1238l40-12M100 1272l25-8 35-4M90 1262l-5 30"/>
          <path d="M225 1290l20-12 10 8 12 6M230 1270l15 10-5 20 15-5M98 1315l20 8M378 1205l3 10M242 1000l15 8M105 895l8 6"/>
          <path d="M495 1090l15-15 15 12 15-10 10 12 12-6 12 14M530 1060l10-16 20-12 24 16M500 1120l-12-20M470 1185l30-8M490 1140l22-2"/>
          <path d="M705 838l10 18 20-12 10 12-5 15-20-6-10 16 15 10-10 14M735 860l20-10 12 14M745 895l10-15 8-6M590 970l40-10 20-20 18-22M725 835l30-12 14 20 14-10 12 14 20-10 18 10M770 880l16-20 20 4M705 880l8 20 20-6"/>
          <path d="M520 930l25-20 10 4M565 992l10 4M508 958l12 4M110 525l18 10M195 538l10 14" />
          <path d="M695 575l10 30 15 20M200 610l12 6"/>
        </g>
        <path d="M727 540L708 527 690 524 668 542 660 572 664 600 675 632 665 652 650 672 653 690 642 705 637 728 640 765 650 788 680 782 660 805 643 815 650 828 684 842 686 855 676 870 673 897" fill="none" stroke="#ef6a92" stroke-width="3.500"/>
        <g fill="#ff9f15" stroke="#5e4a20" stroke-width="2.500">
          <circle cx="727" cy="540" r="10.500"/><circle cx="710" cy="527" r="10"/><circle cx="699" cy="531" r="10.500"/><circle cx="660" cy="554" r="10.500"/><circle cx="660" cy="573" r="10.500"/>
          <circle cx="637" cy="728" r="11"/><circle cx="650" cy="789" r="11"/><circle cx="678" cy="782" r="11"/><circle cx="656" cy="809" r="10"/><circle cx="645" cy="816" r="11"/><circle cx="673" cy="897" r="11"/>
          <path d="M44 428a10 10 0 1 0 12 16l-8-8zM75 460l18-4a10 10 0 1 1-14 16zM109 530l20 6a11 11 0 0 1-20-6zM224 540l18-8a10 10 0 0 1-18 8zM226 355q8-8 18-3l-6 8 4 10q-14 6-16-15zM262 591v20q-12-10 0-20zM52 735l8-9 10 6-10 4 8 8q-12 6-16-9zM22 840q10-18 22 0z"/>
          <circle cx="173" cy="999" r="11"/><path d="M303 1128v24q-18-10 0-24zM585 940l20-2-10 12zM596 862v14q-10-6 0-14zM324 980v12q-14-4 0-12zM806 858l12 4-10 6z"/><circle cx="118" cy="1266" r="5"/><circle cx="564" cy="1088" r="5"/>
        </g>
        <path d="M20 410l8 3-6 2z" fill="#c2527a" stroke="#333"/><circle cx="41" cy="479" r="2.500" fill="#222"/><circle cx="796" cy="938" r="2.500" fill="#222"/>
      </svg>
    </div>
  </section>

  <footer class="status">
    <div class="locate"><svg viewBox="0 0 14 14"><circle cx="5.500" cy="5.500" r="4" fill="none" stroke="#8a8a8a" stroke-width="1.300"/><path d="M8.500 8.500l5 5" stroke="#8a8a8a" stroke-width="1.600"/></svg>Type to locate (Ctrl+K)</div>
    <div class="coord">3265</div>
    <svg class="bug" viewBox="0 0 16 16"><ellipse cx="9.500" cy="10" rx="4.500" ry="5.500" fill="#eee" stroke="#222"/><circle cx="9" cy="11" r="1.800" fill="none" stroke="#222"/><path d="M1 1l6 6M4 0l4 6M0 10l5 0M11 6l4-5M0 6l6 2" stroke="#ddd" stroke-width="1.200"/></svg>
    <span class="w-sc">Scale</span><div class="fld f1">16383773<i class="dn"></i></div>
    <svg class="lock" viewBox="0 0 12 14"><path d="M3 7V4q0-3 3-3t3 3v3" fill="none" stroke="#ddd" stroke-width="1.400"/><path d="M1 7h10v6.500H1z" fill="#505050"/></svg>
    <span class="w-mg">Magnifier</span><div class="fld f2">100%<i class="ud"></i></div>
    <span class="w-ro">Rotation</span><div class="fld f3">0,0 °<i class="ud"></i></div>
    <b class="ck on"></b><span class="w-re">Render</span>
    <svg class="globe" viewBox="0 0 14 14"><circle cx="7" cy="7" r="5.500" fill="#777" stroke="#ddd" stroke-dasharray="1.500 .8"/><path d="M1.500 7h11M7 1.500v11M3 3.500q4 2 8 0M3 10.500q4-2 8 0" stroke="#ddd" fill="none"/></svg>
    <span class="w-ep">EPSG:2964</span>
    <svg class="bub" viewBox="0 0 16 14"><ellipse cx="8" cy="6.500" rx="7.500" ry="6" fill="#5b5b5b"/><path d="M11 10l4 4-7-1.500z" fill="#5b5b5b"/><circle cx="4.500" cy="6" r="1.200" fill="#fff"/><circle cx="8" cy="6" r="1.200" fill="#fff"/><circle cx="11.500" cy="6" r="1.200" fill="#fff"/></svg>
  </footer>
</main>

<section class="dlg d-diff">
  <header><svg class="lg"><use href="#logo"/></svg><span>Difference</span><svg class="cx"><use href="#close"/></svg></header>
  <div class="cols">
    <div class="left"><div class="tabs"><span class="tp">Parameters</span><span class="tl">Log</span></div>
      <div class="pane"><div class="form">
        <label class="h23">Input layer</label>
        <div class="row"><div class="combo ic"><svg><use href="#poly"/></svg>Buffered [EPSG:2964]<i class="dn"></i></div><svg class="lp"><use href="#loop"/></svg><svg class="wr"><use href="#wrench"/></svg><button class="dots">…</button></div>
        <div class="chk dis"><b class="ck"></b>Selected features only</div>
        <label class="h26">Overlay layer</label>
        <div class="row"><div class="combo ic"><svg><use href="#poly"/></svg>Buffered [EPSG:2964]<i class="dn"></i></div><svg class="lp"><use href="#loop"/></svg><svg class="wr"><use href="#wrench"/></svg><button class="dots">…</button></div>
        <div class="chk dis"><b class="ck"></b>Selected features only</div>
        <label class="h26">Difference</label>
        <div class="row"><div class="inp">[Create temporary layer]</div><button class="dots">…</button></div>
        <div class="chk c7"><b class="ck on"></b>Open output file after running algorithm</div>
      </div></div></div>
    <div class="split"><i class="la"></i><i class="dd"></i></div>
    <article class="help"><h3>Difference</h3>
      <p>This algorithm extracts features from the Input<br>layer that fall outside, or partially overlap,<br>features in the Overlay layer. Input layer<br>features that partially overlap feature(s) in the<br>Overlay layer are split along those features'<br>boundary and only the portions outside the<br>Overlay layer features are retained.</p>
      <p>Attributes are not modified, although properties<br>such as area or length of the features will be<br>modified by the difference operation. If such<br>properties are stored as attributes, those<br>attributes will have to be manually updated.</p></article>
  </div>
  <div class="prog"><div>0%</div><button class="cancel">Cancel</button></div>
  <div class="foot"><button class="batch">Run as Batch Process…</button><button class="run">Run</button><button class="cls">Close</button><button class="hlp">Help</button></div>
</section>

<section class="dlg d-buf1">
  <header><svg class="lg"><use href="#logo"/></svg><span>Buffer</span><svg class="cx"><use href="#close"/></svg></header>
  <div class="cols">
    <div class="left"><div class="tabs"><span class="tp">Parameters</span><span class="tl">Log</span></div>
      <div class="pane scr"><div class="form">
        <label class="h23">Input layer</label>
        <div class="row"><div class="combo ic"><svg class="w"><use href="#pts"/></svg>airports [EPSG:2964]<i class="dn"></i></div><svg class="lp"><use href="#loop"/></svg><svg class="wr"><use href="#wrench"/></svg><button class="dots">…</button></div>
        <div class="chk dis"><b class="ck"></b>Selected features only</div>
        <label class="h28">Distance</label>
        <div class="row r22"><div class="fld dist">100,000000<svg><use href="#clear"/></svg><i class="ud"></i></div><div class="fld unit">kilometers<i class="dn"></i></div><svg class="ddf"><use href="#ddef"/></svg></div>
        <label class="h27">Segments</label><div class="fld s21">5<i class="ud"></i></div>
        <label class="h25">End cap style</label><div class="fld s22">Round<i class="dn"></i></div>
        <label class="h25">Join style</label><div class="fld s22">Round<i class="dn"></i></div>
        <label class="h25">Miter limit</label><div class="fld s21">2,000000<i class="ud"></i></div>
      </div><div class="sb"><b></b></div></div></div>
    <div class="split"><i class="la"></i><i class="dd"></i></div>
    <article class="help"><h3>Buffer</h3>
      <p>This algorithm computes a buffer area for all the<br>features in an input layer, using a fixed or<br>dynamic distance.</p>
      <p>The segments parameter controls the number of<br>line segments to use to approximate a quarter<br>circle when creating rounded offsets.</p>
      <p>The end cap style parameter controls how line<br>endings are handled in the buffer.</p>
      <p>The join style parameter specifies whether round,<br>miter or beveled joins should be used when<br>offsetting corners in a line.</p>
      <p>The miter limit parameter is only applicable for<br>miter join styles, and controls the maximum<br>distance from the offset curve to use when<br>creating a mitered join.</p></article>
  </div>
  <div class="prog"><div>0%</div><button class="cancel">Cancel</button></div>
  <div class="foot"><button class="batch">Run as Batch Process…</button><button class="run">Run</button><button class="cls">Close</button><button class="hlp">Help</button></div>
</section>

<section class="dlg d-clip">
  <header><svg class="lg"><use href="#logo"/></svg><span>Clip</span><svg class="cx"><use href="#close"/></svg></header>
  <div class="cols">
    <div class="left"><div class="tabs"><span class="tp">Parameters</span><span class="tl">Log</span></div>
      <div class="pane"><div class="form">
        <label class="h23">Input layer</label>
        <div class="row"><div class="combo ic"><svg><use href="#poly"/></svg>Clipped [EPSG:2964]<i class="dn"></i></div><svg class="lp"><use href="#loop"/></svg><svg class="wr"><use href="#wrench"/></svg><button class="dots">…</button></div>
        <div class="chk dis"><b class="ck"></b>Selected features only</div>
        <label class="h26">Overlay layer</label>
        <div class="row"><div class="combo ic"><svg><use href="#poly"/></svg>regions []<i class="dn"></i></div><svg class="lp"><use href="#loop"/></svg><svg class="wr"><use href="#wrench"/></svg><button class="dots">…</button></div>
        <div class="chk dis"><b class="ck"></b>Selected features only</div>
        <label class="h26">Clipped</label>
        <div class="row"><div class="inp">[Create temporary layer]</div><button class="dots">…</button></div>
        <div class="chk c7"><b class="ck on"></b>Open output file after running algorithm</div>
      </div></div></div>
    <div class="split"><i class="la"></i><i class="dd"></i></div>
    <article class="help"><h3>Clip</h3>
      <p>This algorithm clips a vector layer using the<br>features of an additional polygon layer. Only the<br>parts of the features in the Input layer that fall<br>within the polygons of the Overlay layer will be<br>added to the resulting layer.</p>
      <p>The attributes of the features are not modified,<br>although properties such as area or length of the<br>features will be modified by the clipping operation.<br>If such properties are stored as attributes, those<br>attributes will have to be manually updated.</p></article>
  </div>
  <div class="prog"><div>0%</div><button class="cancel">Cancel</button></div>
  <div class="foot"><button class="batch">Run as Batch Process…</button><button class="run">Run</button><button class="cls">Close</button><button class="hlp">Help</button></div>
</section>

<section class="dlg d-buf2">
  <header><svg class="lg"><use href="#logo"/></svg><span>Buffer</span><svg class="cx"><use href="#close"/></svg></header>
  <div class="cols">
    <div class="left"><div class="tabs"><span class="tp">Parameters</span><span class="tl">Log</span></div>
      <div class="pane scr"><div class="form">
        <label class="h23">Input layer</label>
        <div class="row"><div class="combo ic"><svg class="w"><use href="#vline"/></svg>railroads [EPSG:2964]<i class="dn"></i></div><svg class="lp"><use href="#loop"/></svg><svg class="wr"><use href="#wrench"/></svg><button class="dots">…</button></div>
        <div class="chk dis"><b class="ck"></b>Selected features only</div>
        <label class="h28">Distance</label>
        <div class="row r22"><div class="fld dist">50,000000<svg><use href="#clear"/></svg><i class="ud"></i></div><div class="fld unit">kilometers<i class="dn"></i></div><svg class="ddf"><use href="#ddef"/></svg></div>
        <label class="h27">Segments</label><div class="fld s21">5<i class="ud"></i></div>
        <label class="h25">End cap style</label><div class="fld s22">Round<i class="dn"></i></div>
        <label class="h25">Join style</label><div class="fld s22">Round<i class="dn"></i></div>
        <label class="h25">Miter limit</label><div class="fld s21">2,000000<i class="ud"></i></div>
        <div class="chk c7"><b class="ck lite"></b>Dissolve result</div>
        <label class="h26">Buffered</label>
        <div class="row"><div class="inp">[Create temporary layer]</div><button class="dots">…</button></div>
        <div class="chk c7"><b class="ck on"></b>Open output file after running algorithm</div>
      </div><div class="sb"><b></b></div></div></div>
    <div class="split"><i class="la"></i><i class="dd"></i></div>
    <article class="help"><h3>Buffer</h3>
      <p>This algorithm computes a buffer area for all the<br>features in an input layer, using a fixed or<br>dynamic distance.</p>
      <p>The segments parameter controls the number of<br>line segments to use to approximate a quarter<br>circle when creating rounded offsets.</p>
      <p>The end cap style parameter controls how line<br>endings are handled in the buffer.</p>
      <p>The join style parameter specifies whether round,<br>miter or beveled joins should be used when<br>offsetting corners in a line.</p>
      <p>The miter limit parameter is only applicable for<br>miter join styles, and controls the maximum<br>distance from the offset curve to use when<br>creating a mitered join.</p></article>
  </div>
  <div class="prog"><div>0%</div><button class="cancel">Cancel</button></div>
  <div class="foot"><button class="batch">Run as Batch Process…</button><button class="run">Run</button><button class="cls">Close</button><button class="hlp">Help</button></div>
</section>
</div>
</body>
</html>
```
FILE: styles.css
```css
* { box-sizing: border-box; }
body { margin: 0; font: 11px/13px "DejaVu Sans Condensed", "DejaVu Sans", sans-serif; font-stretch: condensed; letter-spacing: -.2px; color: #0b0b0b; }
button { font: inherit; letter-spacing: inherit; color: inherit; margin: 0; padding: 0; }
ul { list-style: none; margin: 0; padding: 0; }
svg { display: block; flex: none; overflow: visible; }
.defs { position: absolute; width: 0; height: 0; }
.desk { position: relative; width: 1920px; height: 1040px; overflow: hidden; background: #727272; }
.app { display: flex; flex-direction: column; width: 1920px; height: 1040px; }
.i16 { width: 16px; height: 16px; }

.app-title { height: 23px; background: #fff; display: flex; align-items: center; gap: 5px; padding-left: 2px; font: 12px "Open Sans", sans-serif; letter-spacing: -.35px; color: #111; }
.menu { height: 20px; background: #353535; color: #b8b8b8; display: flex; align-items: center; gap: 14px; padding: 2px 0 0 10px; font-size: 12px; letter-spacing: -.05px; white-space: nowrap; overflow: hidden; }
.menu u { text-underline-offset: 2px; }

.bar { display: flex; align-items: center; padding-left: 4px; overflow: hidden; }
.bar .t { width: 22px; height: 22px; margin-right: 12px; }
.bar1 { height: 38px; }
.bar2 { height: 40px; }
.bar3 { height: 38px; }
.grip { flex: none; width: 2px; height: 12px; background: #a9a9a9; margin-right: 6px; }
.tb { width: 33px; height: 33px; border-radius: 5px; border: 1px solid #333; background: linear-gradient(#9d9d9d, #878787); display: flex; align-items: center; justify-content: center; margin: 0 7px 0 -5px; flex: none; }
.bar .tb .t { margin: 0; }
.tb.pan { background: none; border-color: #eee; margin-left: 0; }
.bar1 .g2 { margin: 0 1px 0 0; }
.off { opacity: .35; }
.dim { opacity: .28; }
.stya { font: 13px "DejaVu Sans"; fill: #ddd; }
.one { font: bold 8px "DejaVu Sans"; fill: #222; }
.eps { font: bold 13px "DejaVu Sans"; fill: #6b3f72; }
.sep { width: 2px; height: 9px; background: #555; flex: none; }
.s1 { margin: 0 9px 0 -4px; }
.s2 { margin: 0 9px 0 -4px; }
.bar2 .g3 { margin-right: 9px; }
.arr { flex: none; width: 0; height: 0; border: 3px solid transparent; border-top: 5px solid #aaa; border-bottom: 0; }
.bar .arr { margin: 0 12px 0 1px; }
.bar .a1 { margin: 0 5px 0 -1px; border-top-color: #ddd; }
.bar3 .t { margin-right: 10px; }

.work { flex: 1; display: flex; min-height: 0; }
.docks { width: 271px; display: flex; flex-direction: column; }
.dock-title { position: relative; margin: 0; height: 22px; padding-right: 30px; font: inherit; font-size: 12px; text-align: center; line-height: 23px; }
.dx { position: absolute; right: 8px; top: 3px; width: 12px; height: 12px; }
.dock-tools { height: 30px; display: flex; align-items: center; gap: 10px; padding: 0 0 5px 7px; }
.dock-tools svg { width: 16px; height: 16px; }
.dock-tools.lay { height: 29px; padding-bottom: 2px; }
.lay .arr { margin: 0 1px 0 1px; }
.tree, .layers { position: relative; border: 1px solid #333; border-radius: 3px; background: #b1b1b1; display: flex; justify-content: space-between; overflow: hidden; flex: none; }
.tree { width: 264px; height: 134px; margin-top: -2px; padding: 1px; }
.tree li { display: flex; align-items: center; height: 18px; font-size: 12px; letter-spacing: -.15px; }
.tree ul { padding-top: 2px; }
.tree li svg { width: 15px; height: 15px; margin-right: 7px; }
.tree li i { width: 19px; flex: none; }
.layers li i { width: 24px; flex: none; }
.tri::before { content: ""; display: block; margin-left: 5px; width: 0; height: 0; border: 3px solid transparent; border-left: 5px solid #777; border-right: 0; }
.sb { width: 10px; background: #353535; border: 1px solid #333; flex: none; }
.sb b { display: block; background: #727272; height: 49px; }
.lt { margin-top: 5px; height: 22px; line-height: 23px; }
.layers { width: 265px; height: 610px; padding: 1px; }
.layers .sb b { height: 538px; }
.layers ul { flex: 1; padding-top: .5px; }
.layers li { display: flex; align-items: center; height: 22px; }
.layers li.sel { background: #efefef; }
.layers .tri::before { margin-left: 7px; }
.layers li b, .ck { position: relative; width: 16px; height: 16px; border: 1px solid #333; border-radius: 4px; flex: none; margin-right: 7px; }
.on::after { content: ""; position: absolute; left: 5px; top: 0; width: 5px; height: 10px; border: solid #2b2b2b; border-width: 0 2px 2px 0; transform: rotate(38deg); }
.layers li.sel b { background: #b1b1b1; }
.layers li s { text-decoration: none; flex: none; width: 16px; margin-right: 6px; }
.sw { height: 16px; border: 1px solid rgba(0,0,0,.45); }
.ln { height: 2px; }
.layers li s.pt { width: 7px; height: 7px; border-radius: 50%; border: 1px solid #555; margin: 0 11px 0 4px; }
.pl { width: 16px; height: 13px; margin-right: 6px; }
.layers em { font: italic bold 12px "Open Sans", sans-serif; letter-spacing: -.2px; color: #111; padding-left: .5px; }
.layers em.up { font-style: normal; }
.layers em.un { text-decoration: underline; font-weight: 600; text-underline-offset: 2px; }
.mem { margin-left: auto; margin-right: 6px; width: 19px; height: 19px; border: 1px solid #999; border-radius: 3px; background: #bcbcbc; display: grid; place-items: center; }
.mem svg { width: 13px; height: 12px; }
.c1 { background: #8d5a99; } .c2 { background: #d5b43c; } .c3 { background: #729b6f; } .c4 { background: #e8718d; }
.c5 { background: #f3bbc5; } .c6 { background: #a47158; } .sw.c7 { background: #85b66f; } .c8 { background: #7d8b8f; }
.c9 { background: #beb297; } .c10 { background: #e15989; } .c11 { background: #becf50; } .c12 { background: #987db7; }
.c13 { background: #e77148; } .c14 { background: #b9484e; } .c15 { background: #ff9f15; }
.l1 { background: #91a88f; } .l2 { background: #c4b077; } .l3 { background: #c98198; } .l4 { background: #98b08c; } .l5 { background: #c4706f; }
.p1 { background: #b0694a; } .p2 { background: #76888c; } .p3 { background: #8d5a99; } .p4 { background: #f59aa8; } .p5 { background: #ff9f15; }

.canvas { width: 1649px; background: #fff; border-left: 1px solid #444; margin-top: 1px; height: 849px; overflow: hidden; }
.msg { height: 30px; background: #dff0d8; border: 1px solid #8c9c84; display: flex; align-items: center; padding-left: 9px; font-size: 11.5px; letter-spacing: -.3px; color: #111; }
.msg svg { width: 24px; height: 19px; margin-right: 9px; }
.msg strong { font: bold 11.5px "Open Sans", sans-serif; letter-spacing: -.1px; }
.map { width: 294px; height: 819px; }

.status { height: 30px; display: flex; align-items: center; padding: 0 0 1px 4px; font-size: 10.5px; }
.locate { width: 200px; height: 22px; border: 1px solid #333; border-radius: 4px; background: #b1b1b1; color: #555; display: flex; align-items: center; padding-left: 9px; font-size: 11.5px; letter-spacing: -.25px; }
.locate svg { width: 13px; height: 13px; margin-right: 8px; }
.coord { margin-left: 976px; width: 77px; height: 21px; background: #b9b9b9; border: 1px solid #333; border-radius: 3px; text-align: right; padding-right: 6px; line-height: 20px; }
.bug { width: 16px; height: 16px; margin: 0 13px 0 5px; }
.w-sc { width: 29px; } .lock { width: 12px; height: 14px; margin: 0 9px 0 13px; } .w-mg { width: 48px; } .w-ro { width: 51px; margin-left: 8px; } .w-re { width: 49px; } .w-ep { width: 56px; letter-spacing: -.1px; }
.status .ck { margin-left: 8px; }
.globe { width: 14px; height: 14px; margin-right: 1px; }
.bub { width: 16px; height: 14px; margin-left: 20px; }
.f1 { width: 97px; } .f2 { width: 84px; } .f3 { width: 84px; }

.fld, .combo { position: relative; height: 22px; border: 1px solid #1d1d1d; border-radius: 4px; background: linear-gradient(#4c4c4c, #383838); color: #b9b9b9; display: flex; align-items: center; padding: 0 5px; flex: none; }
.dn { margin-left: auto; border: 2.500px solid transparent; border-top: 6px solid #bbb; border-bottom: 0; margin-right: 2px; }
.ud { margin-left: auto; width: 6px; height: 12px; margin-right: 1px; background: #bbb; clip-path: polygon(50% 0, 100% 45%, 0 45%, 0 55%, 100% 55%, 50% 100%, 0 55%, 0 45%); }
.ck { margin-right: 6px; }
.ck.on, .ck.lite { background: #b1b1b1; }

.dlg { position: absolute; background: #727272; box-shadow: 0 0 10px rgba(0,0,0,.32), 0 0 0 1px rgba(120,120,120,.6); padding-left: 11px; overflow: hidden; }
.dlg header { height: 30px; margin: 0 0 11px -11px; background: #fff; display: flex; align-items: center; padding: 0 11px 2px 8px; font: 12px "Open Sans", sans-serif; letter-spacing: -.45px; color: #8a8a8a; }
.lg { width: 16px; height: 16px; margin-right: 5px; }
.cx { width: 11px; height: 11px; margin-left: auto; }
.d-diff { left: 541px; top: 4px; width: 689px; height: 554px; }
.d-clip { left: 542px; top: 558px; width: 688px; height: 482px; }
.d-clip header { padding-right: 9px; }
.d-buf1 { left: 1230px; top: 5px; width: 688px; height: 455px; }
.d-buf2 { left: 1231px; top: 461px; width: 688px; height: 553px; }
.d-buf1 header, .d-buf2 header { padding-right: 9px; }
.cols { display: flex; height: 420px; }
.d-clip .cols { height: 349px; }
.d-buf1 .cols { height: 322px; }
.left { width: 394px; display: flex; flex-direction: column; }
.tabs { height: 24px; display: flex; align-items: flex-end; position: relative; z-index: 1; margin-bottom: -1px; }
.tabs span { border: 1px solid #333; border-bottom: 0; text-align: center; }
.tp { width: 89px; height: 24px; line-height: 24px; background: #727272; }
.tl { width: 51px; height: 18px; line-height: 18px; margin-left: -1px; border-bottom: 1px solid #333 !important; }
.pane { flex: 1; min-height: 0; border: 1px solid #333; overflow: hidden; display: flex; }
.form { flex: 1; padding: 0 4px; overflow: hidden; }
.scr .form { padding-right: 1px; }
.pane label { display: block; }
.h23 { height: 23px; line-height: 22px; }
.h25 { height: 25px; line-height: 25px; }
.h26 { height: 26px; line-height: 28px; }
.h27 { height: 27px; line-height: 29px; }
.h28 { height: 28px; line-height: 28px; }
.row { display: flex; }
.combo { height: 24px; width: 282px; padding-left: 4px; letter-spacing: -.1px; }
.scr .combo { width: 272px; }
.combo svg { width: 16px; height: 13px; margin: -3px 5px 0 0; }
.combo svg.w { width: 17px; height: 17px; margin: 0 4px 0 0; }
.lp { width: 18px; height: 16px; margin: 5px 17px 0 12px; }
.wr { width: 18px; height: 18px; margin: 4px 12px 0 0; }
.dots { position: relative; width: 24px; height: 22px; border: 1px solid #333; border-radius: 4px; background: linear-gradient(#9d9d9d, #868686); line-height: 22px; margin-left: auto; flex: none; text-align: left; padding-left: 5px; }
.dots::after { content: ""; position: absolute; right: 3px; bottom: 5px; border: 4px solid transparent; border-top: 5px solid #222; border-bottom: 0; }
.chk { display: flex; align-items: center; height: 16px; margin: 9px 0 0 1px; white-space: nowrap; }
.chk.dis { color: #969696; letter-spacing: 0; }
.chk.dis .ck { border-color: #444; }
.chk.c7 { margin-top: 7px; }
.inp { width: 354px; height: 22px; border: 1px solid #333; border-radius: 4px; background: #b1b1b1; color: #5c5c5c; line-height: 21px; padding-left: 4px; letter-spacing: -.1px; }
.scr .inp { width: 344px; }
.dist { width: 235px; } .dist svg { width: 13px; height: 11px; margin-left: auto; } .dist .ud { margin-left: 15px; margin-right: 0; }
.unit { width: 94px; margin-left: 9px; padding-left: 4px; }
.ddf { width: 22px; height: 18px; margin: 2px 0 0 10px; }
.s21 { height: 21px; }
.pane .sb { margin: 1px 1px 0 0; width: 11px; }
.d-buf1 .sb b { height: 213px; }
.d-buf2 .sb b { height: 380px; }
.split { position: relative; width: 17px; display: grid; place-items: center; }
.la { position: absolute; left: 5px; top: 2px; border: 4px solid transparent; border-right: 4px solid #222; border-left: 0; }
.dd { width: 3px; height: 18px; background: repeating-linear-gradient(#b5b5b5 0 2px, transparent 2px 3px); }
.help { width: 255px; border: 1px solid #333; border-radius: 4px; background: #b1b1b1; color: #5f5f5f; padding: 7px 0 0 5px; white-space: nowrap; overflow: hidden; font-size: 10.5px; letter-spacing: -.25px; }
.help h3 { margin: 0 0 14px; font-size: 16px; line-height: 19px; color: #474747; letter-spacing: -.55px; }
.help p { margin: 0 0 12px; }
.prog { display: flex; margin-top: 25px; height: 27px; align-items: center; gap: 6px; }
.prog div { width: 618px; height: 27px; border: 1px solid #333; border-radius: 4px; text-align: center; line-height: 26px; }
.prog button, .foot button { height: 23px; border: 1px solid #333; border-radius: 4px; flex: none; }
.prog .cancel { width: 42px; background: none; color: #969696; }
.foot { display: flex; margin-top: 6px; gap: 6px; }
.foot button { background: linear-gradient(#9d9d9d, #868686); white-space: nowrap; }
.batch { width: 122px; margin-right: auto; }
.foot .batch { letter-spacing: -.1px; }
.run { width: 29px; } .cls { width: 36px; } .hlp { width: 31px; margin-right: 12px; }
.d-clip .hlp, .d-buf1 .hlp, .d-buf2 .hlp { margin-right: 11px; }
```
